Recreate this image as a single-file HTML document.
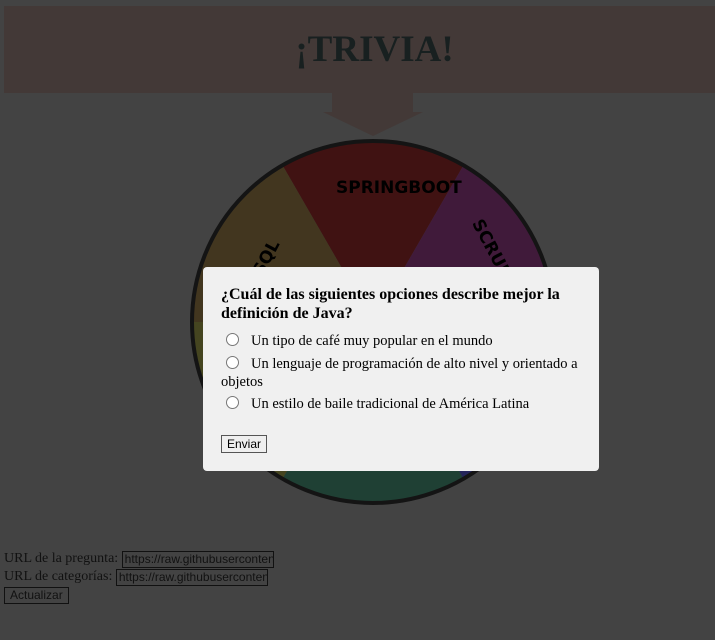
<!DOCTYPE html>
<html><head><meta charset="utf-8"><style>
html,body{margin:0;padding:0;width:715px;height:640px;overflow:hidden;background:#434343;font-family:"Liberation Serif",serif;}
.hdr{position:absolute;left:4px;top:6px;width:711px;height:87px;background:#433937;}
.hdr h1{margin:0;text-align:center;font-size:37px;font-weight:bold;color:#182020;line-height:87px;padding-left:30px;}
.stem{position:absolute;left:332px;top:93px;width:81px;height:20px;background:#433937;}
.tri{position:absolute;left:323px;top:112px;width:0;height:0;border-left:50px solid transparent;border-right:50px solid transparent;border-top:24px solid #433937;}
svg{position:absolute;left:0;top:0;}
.lbl{position:absolute;font-family:"DejaVu Sans",sans-serif;font-weight:bold;color:#000;font-size:17px;}
.modal{position:absolute;left:203px;top:267px;width:396px;height:204px;background:#f0f0f0;border-radius:4px;}
.q{position:absolute;left:18px;top:18px;width:370px;font-size:16px;font-weight:bold;line-height:19px;color:#000;}
.opt{position:absolute;left:18px;font-size:14.5px;color:#000;line-height:18px;width:375px;}
.r{display:inline-block;width:11px;height:11px;border:1px solid #777;border-radius:50%;background:#fff;vertical-align:-1px;margin:0 12px 0 5px;}
.btn{position:absolute;left:18px;top:168px;width:44px;height:16px;border:1px solid #555;background:#efefef;font-family:"Liberation Sans",sans-serif;font-size:12px;text-align:center;line-height:16px;}
.bottom{position:absolute;left:4px;top:550px;font-size:14px;color:#111;line-height:18px;}
.in{display:inline-block;border:1px solid #111;font-family:"Liberation Sans",sans-serif;font-size:12px;width:148px;height:15px;line-height:15px;overflow:hidden;white-space:nowrap;padding-left:2px;vertical-align:top;margin-top:1px;}
.ab{display:inline-block;border:1px solid #111;font-family:"Liberation Sans",sans-serif;font-size:12px;padding:0 5px;height:15px;line-height:15px;margin-top:1px;}
</style></head><body>
<div class="hdr"><h1>¡TRIVIA!</h1></div>
<div class="stem"></div><div class="tri"></div>
<svg width="715" height="640">
<path d="M373 322 L282.5 165.2 A181 181 0 0 1 463.5 165.2 Z" fill="#401212"/>
<path d="M373 322 L463.5 165.2 A181 181 0 0 1 554 322 Z" fill="#401a3a"/>
<path d="M373 322 L554 322 A181 181 0 0 1 463.5 478.8 Z" fill="#24245a"/>
<path d="M373 322 L463.5 478.8 A181 181 0 0 1 282.5 478.8 Z" fill="#1f4034"/>
<path d="M373 322 L282.5 478.8 A181 181 0 0 1 192 322 Z" fill="#454520"/>
<path d="M373 322 L192 322 A181 181 0 0 1 282.5 165.2 Z" fill="#42361f"/>
<circle cx="373" cy="322" r="181" fill="none" stroke="#141414" stroke-width="4"/>
</svg>
<div class="lbl" style="left:336px;top:178px;">SPRINGBOOT</div>
<div class="lbl" style="transform:rotate(62deg);transform-origin:0 0;left:485px;top:216px;">SCRUM</div>
<div class="lbl" style="left:248px;top:248px;transform:rotate(-62deg);">SQL</div>
<div class="modal">
<div class="q">¿Cuál de las siguientes opciones describe mejor la definición de Java?</div>
<div class="opt" style="top:65px"><span class="r"></span>Un tipo de café muy popular en el mundo</div>
<div class="opt" style="top:88px"><span class="r"></span>Un lenguaje de programación de alto nivel y orientado a objetos</div>
<div class="opt" style="top:128px"><span class="r"></span>Un estilo de baile tradicional de América Latina</div>
<div class="btn">Enviar</div>
</div>
<div class="bottom">
URL de la pregunta: <span class="in">https://raw.githubusercontent.com</span><br>
URL de categorías: <span class="in">https://raw.githubusercontent.com</span><br>
<span class="ab">Actualizar</span>
</div>
</body></html>
